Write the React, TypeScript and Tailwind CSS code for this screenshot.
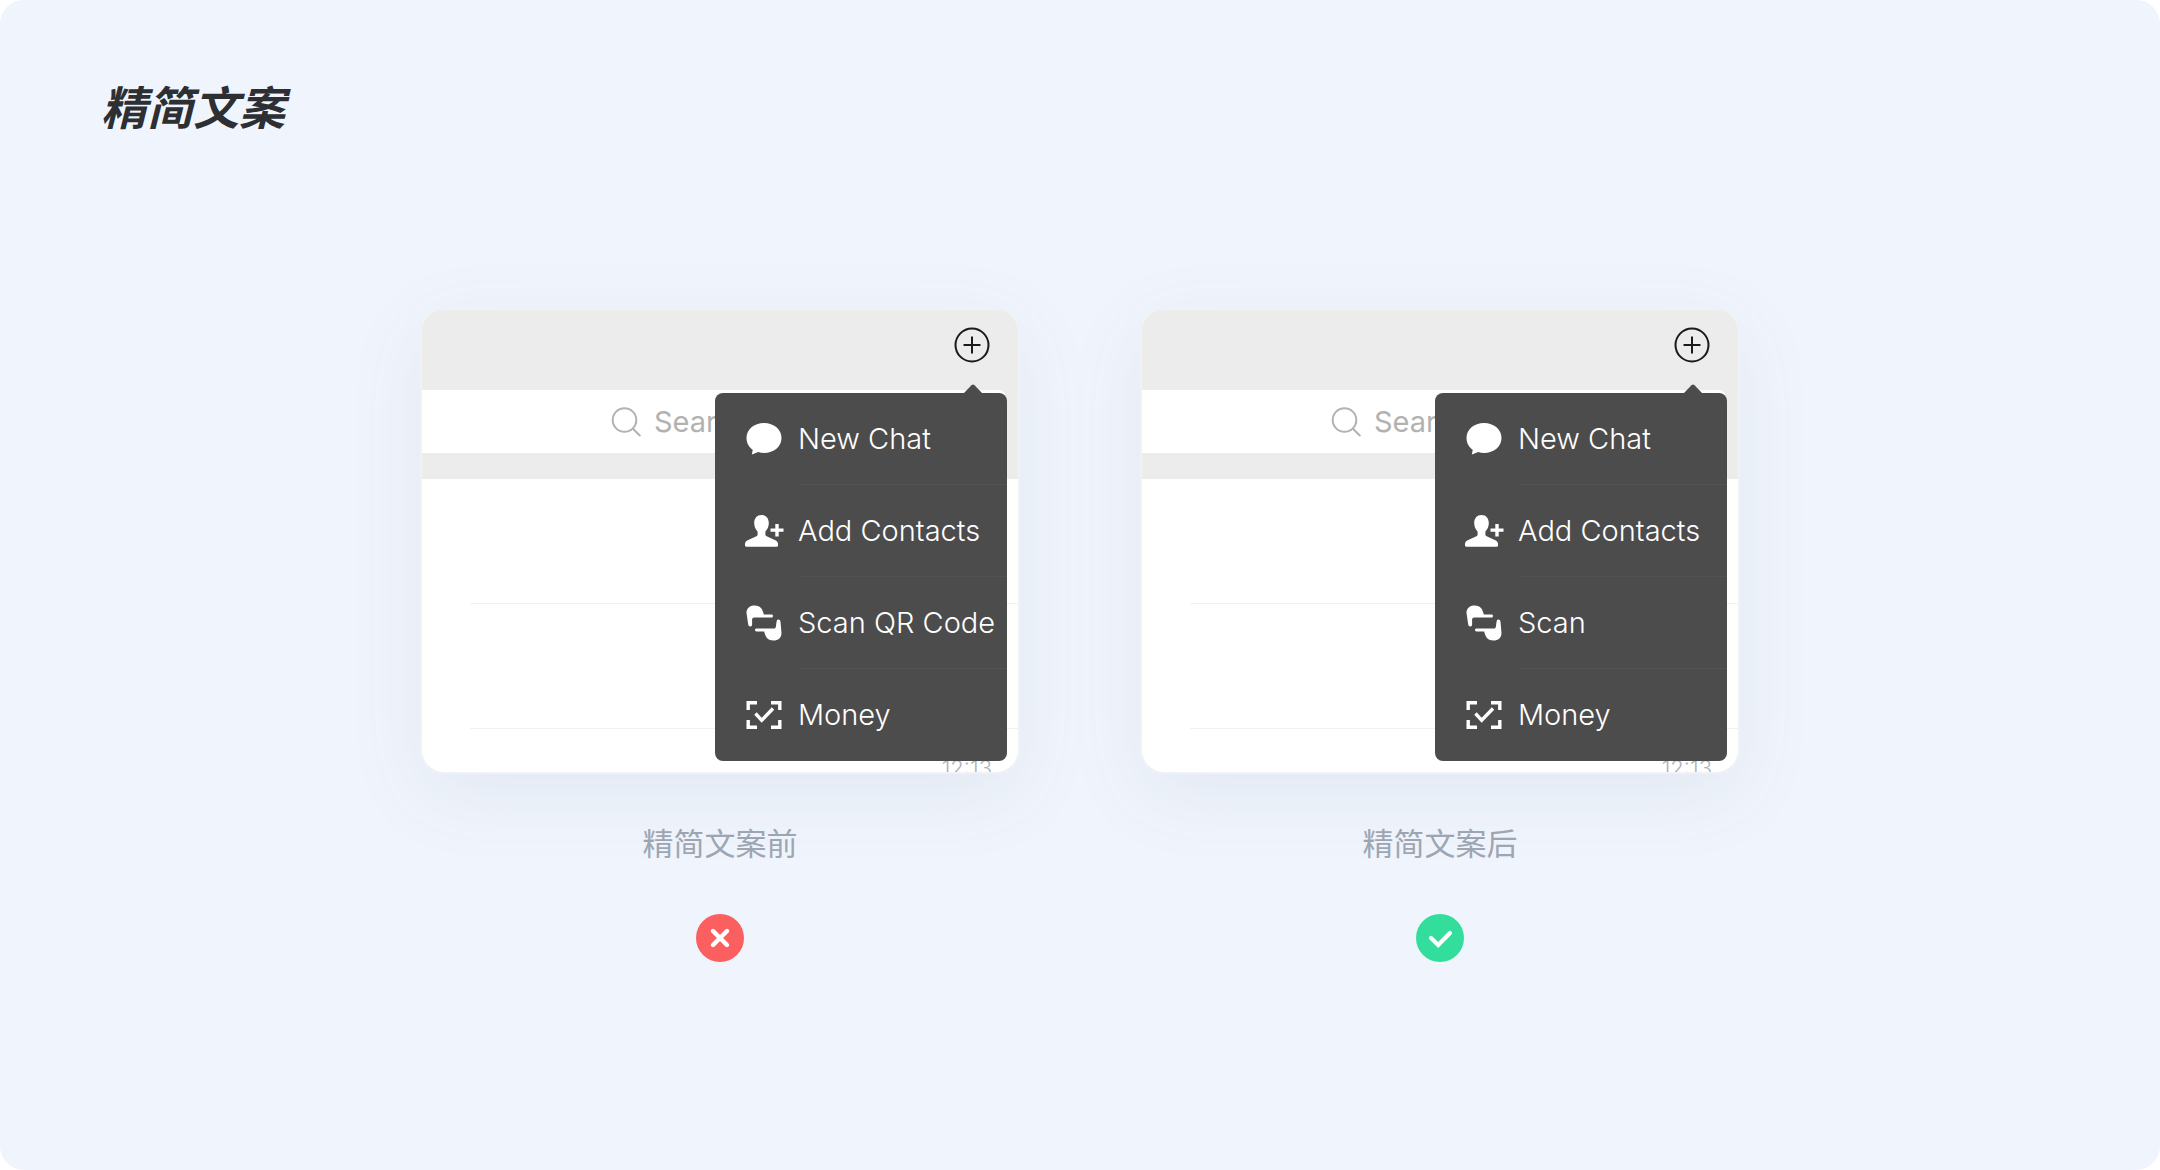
import type { ReactNode } from "react";

function ChatIcon() {
    return (
        <svg viewBox="0 0 40 40" className="size-10 fill-white" aria-hidden="true">
            <path d="M20 4C10 4 2.500 10.500 2.500 19c0 5 2.400 9 6.200 11.700L7.900 35.600l6.400-2.600c1.800.600 3.700.900 5.700.900 10 0 17.500-6.500 17.500-15S30 4 20 4Z" />
        </svg>
    );
}

function ContactIcon() {
    return (
        <svg viewBox="0 0 40 40" className="size-10 fill-white" aria-hidden="true">
            <path d="M17.500 4c-4.600 0-7.300 3.500-7.300 8 0 3.600 1.300 6.500 3.400 8.400v3.400c0 .7-.4 1-1.200 1.400L4.200 29C2 30 1 31.200 1 33v1.500c0 .8.500 1.200 1.300 1.200h30.400c.8 0 1.300-.4 1.300-1.200V33c0-1.800-1-3-3.200-4l-8.200-3.800c-.8-.4-1.200-.7-1.200-1.400v-3.400c2.100-1.900 3.400-4.800 3.400-8.400 0-4.500-2.700-8-7.300-8Z" />
            <path d="M31.300 13h3.400v4.500h4.800v3.300h-4.800v4.700h-3.400v-4.700h-4.800v-3.300h4.800Z" />
        </svg>
    );
}

function ScanIcon() {
    return (
        <svg viewBox="0 0 40 40" className="size-10 fill-white" aria-hidden="true">
            <path d="M2.500 10C2.500 5 6 2.500 10.500 2.500c5.300 0 8.200 3.200 9.300 9h7.600c1.100 0 1.600.6 1.600 1.400s-.5 1.500-1.600 1.500H10.300c-1.300 0-2.200.8-2.200 2.100v5c0 1.300-.7 2-1.700 2-1.300 0-2-.7-2.200-2.200Z" />
            <path d="M37.500 30c0 5-3.500 7.500-8 7.500-5.300 0-8.200-3.200-9.300-9h-7.600c-1.100 0-1.600-.6-1.600-1.400s.5-1.500 1.600-1.500h17.100c1.300 0 2.200-.8 2.200-2.100l.7-5c.1-1.300.7-2 1.700-2 1.300 0 2 .7 2.200 2.200Z" />
        </svg>
    );
}

function MoneyIcon() {
    return (
        <svg viewBox="0 0 40 40" className="size-10 fill-none stroke-white" strokeWidth="3.400" aria-hidden="true">
            <path d="M13 7.700H4.200V15M27 7.700h8.800V15M13 32.300H4.200V25M27 32.300h8.800V25" />
            <path d="m11.500 18.500 6.200 6.800L29 13.500" />
        </svg>
    );
}

function MenuItem({ icon, label }: { icon: ReactNode; label: string }) {
    return (
        <li className="group">
            <button type="button" className="flex h-[92px] w-full items-center pl-[29px] text-left">
                {icon}
                <span className="ml-[14px] flex h-full flex-1 items-center whitespace-nowrap border-b border-[#525252] group-last:border-b-0">
                    {label}
                </span>
            </button>
        </li>
    );
}

function ChatCard({ scanLabel }: { scanLabel: string }) {
    return (
        <div className="relative w-full rounded-3xl border-2 border-[#f0f2f4] bg-[#ececec] shadow-[0_20px_80px_rgba(60,80,100,0.08)]">
            <div className="flex h-20 items-center justify-end pr-7">
                <button type="button" aria-label="Add" className="-mt-2.5 size-9">
                    <svg viewBox="0 0 36 36" className="size-9 fill-none stroke-[#1a1a1a]" strokeWidth="2" aria-hidden="true">
                        <circle cx="18" cy="18" r="16.500" />
                        <path d="M18 9.500v17M9.500 18h17" />
                    </svg>
                </button>
            </div>
            <label className="mr-3 flex h-[63px] items-center rounded-r-lg bg-white pl-[188px] text-[#b2b2b2]">
                <svg viewBox="0 0 32 32" className="size-8 shrink-0 fill-none stroke-[#b2b2b2]" strokeWidth="2" aria-hidden="true">
                    <circle cx="14.500" cy="14" r="11.800" />
                    <path d="m22.800 22.500 7 7" strokeLinecap="round" />
                </svg>
                <input
                    type="text"
                    aria-label="Search"
                    placeholder="Search"
                    className="ml-3 w-40 bg-transparent text-[29px] outline-none placeholder:text-[#b2b2b2]"
                />
            </label>
            <div className="mt-[26px] overflow-hidden rounded-b-[22px] bg-white">
                <div className="ml-12 h-[125px] border-b border-[#f1f1f1]"></div>
                <div className="ml-12 h-[125px] border-b border-[#f1f1f1]"></div>
                <div className="flex h-[43px] items-end justify-end overflow-hidden pr-[26px]">
                    <span className="-mb-2 text-[22px] leading-6 font-light text-[#b2b2b2]">12:13</span>
                </div>
            </div>

            <div className="absolute top-[83px] right-[11px] w-[292px] rounded-lg bg-[#4c4c4c] text-[29px] font-light text-white">
                <svg viewBox="0 0 20 10" className="absolute -top-[9px] right-6 h-[10px] w-5 fill-[#4c4c4c]" aria-hidden="true">
                    <path d="M0 10 8.500 1.200c.9-.9 2.100-.9 3 0L20 10Z" />
                </svg>
                <ul>
                    <MenuItem icon={<ChatIcon />} label="New Chat" />
                    <MenuItem icon={<ContactIcon />} label="Add Contacts" />
                    <MenuItem icon={<ScanIcon />} label={scanLabel} />
                    <MenuItem icon={<MoneyIcon />} label="Money" />
                </ul>
            </div>
        </div>
    );
}

function Example({ scanLabel, caption, children }: { scanLabel: string; caption: string; children: ReactNode }) {
    return (
        <figure className="flex w-full max-w-[600px] flex-col items-center">
            <ChatCard scanLabel={scanLabel} />
            <figcaption className="mt-[46px] text-[31px] leading-[48px] text-[#9fa7b4]">{caption}</figcaption>
            <div className="mt-[46px]">{children}</div>
        </figure>
    );
}

export default function App() {
    return (
        <main className="min-h-screen rounded-3xl bg-[#f0f5fd] font-[Inter,'Noto_Sans_CJK_SC',sans-serif]">
            <h1 className="px-[101px] pt-[72px] text-[46px] leading-[72px] font-bold text-[#2d2f33] italic">精简文案</h1>
            <section className="flex justify-center gap-[120px] px-12 pt-[164px] pb-24">
                <Example scanLabel="Scan QR Code" caption="精简文案前">
                    <svg viewBox="0 0 48 48" className="size-12" role="img" aria-label="Not recommended">
                        <circle cx="24" cy="24" r="24" fill="#fb5f5f" />
                        <path d="m17 17 14 14M31 17 17 31" stroke="#fff" strokeWidth="4.400" strokeLinecap="round" />
                    </svg>
                </Example>
                <Example scanLabel="Scan" caption="精简文案后">
                    <svg viewBox="0 0 48 48" className="size-12" role="img" aria-label="Recommended">
                        <circle cx="24" cy="24" r="24" fill="#33dd9c" />
                        <path d="m15 24 7.200 7L34 19" fill="none" stroke="#fff" strokeWidth="4.200" strokeLinecap="round" />
                    </svg>
                </Example>
            </section>
        </main>
    );
}
